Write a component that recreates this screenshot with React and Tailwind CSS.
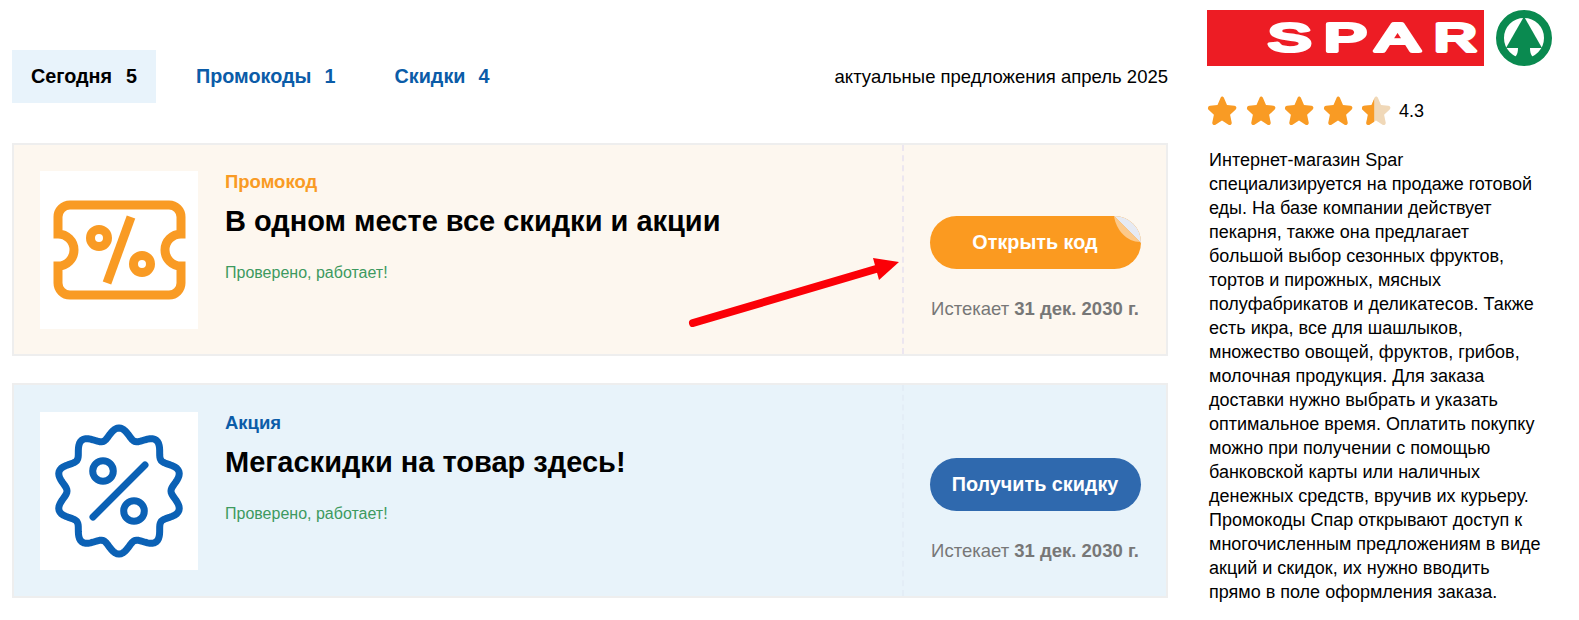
const badgePath = (() => {
  const pts = [];
  for (let i = 0; i < 200; i++) {
    const t = (i / 200) * Math.PI * 2;
    const r = 57.5 + 5.5 * Math.cos(10 * t);
    pts.push(`${(79 + r * Math.sin(t)).toFixed(2)} ${(79 - r * Math.cos(t)).toFixed(2)}`);
  }
  return `M${pts.join("L")}Z`;
})();

const TicketIcon = () => (
  <svg viewBox="0 0 158 158" className="w-[158px] h-[158px]" fill="none" stroke="#f99b24" strokeWidth="9">
    <path d="M30 34H129a12 12 0 0 1 12 12V63a16 16 0 0 0 0 32V112a12 12 0 0 1-12 12H30a12 12 0 0 1-12-12V95a16 16 0 0 0 0-32V46a12 12 0 0 1 12-12Z" />
    <path d="M91 46L67 112" />
    <circle cx="59" cy="67" r="8.5" />
    <circle cx="102" cy="93" r="8.5" />
  </svg>
);

const BadgeIcon = () => (
  <svg viewBox="0 0 158 158" className="w-[158px] h-[158px]" fill="none" stroke="#0b61b5" strokeWidth="7" strokeLinecap="round">
    <path d={badgePath} strokeLinejoin="round" />
    <path d="M105 53L53 105" />
    <circle cx="63" cy="59" r="10.3" />
    <circle cx="94" cy="99" r="10.3" />
  </svg>
);

const Star = ({ half }) => {
  const d = "M15 1.5c.9 0 1.6.6 2 1.4l3 7 7.4.8c2 .2 2.7 2.500 1.300 3.800l-5.600 5.300 1.600 7.600c.4 1.900-1.600 3.300-3.200 2.300L15 25.500l-6.500 4.200c-1.600 1-3.600-.4-3.200-2.300l1.600-7.600-5.600-5.300C.4 13.200 1.100 10.900 3.100 10.700l7.400-.8 3-7c.4-.8 1.100-1.400 1.500-1.400Z";
  return (
    <svg viewBox="0 0 30 32" className="w-[30px] h-[32px]">
      {half ? (
        <>
          <path d={d} fill="#f0d8b8" />
          <path d={d} fill="#f99b24" style={{ clipPath: "inset(0 57% 0 0)" }} />
        </>
      ) : (
        <path d={d} fill="#f99b24" />
      )}
    </svg>
  );
};

// the wordmark stays real text, one stretched letter at a time
const sparLetters = [
  ["S", 62],
  ["P", 118],
  ["A", 170],
  ["R", 228],
];

const SparLogo = () => (
  <svg viewBox="0 0 349 56" className="w-[349px] h-[56px] block">
    <rect x="1" y="0" width="277" height="56" fill="#ed1c24" />
    {sparLetters.map(([ch, x]) => (
      <text key={ch} x={x} y="41" textLength="43" lengthAdjust="spacingAndGlyphs" fontFamily="'Liberation Sans', sans-serif" fontSize="38" fill="#fff" stroke="#fff" strokeWidth="4" strokeLinejoin="round">
        {ch}
      </text>
    ))}
    <circle cx="318" cy="28" r="24" fill="none" stroke="#0a8a50" strokeWidth="8" />
    <path d="M318 6.500L336 38H300Z" fill="#0a8a50" />
    <path d="M312 38H324C324 44 326 48 332 50L318 54L304 50C310 48 312 44 312 38Z" fill="#0a8a50" />
  </svg>
);

const Card = ({ h, pad, btnPad, bg, dash, kind, kindColor, title, icon, btn, btnColor, peel, arrow }) => (
  <div className={`relative flex border-2 border-[#eeeeee] ${h} ${bg}`}>
    <div className={`flex-1 flex pl-[26px] border-r-2 border-dashed ${pad} ${dash}`}>
      <div className="w-[158px] h-[158px] bg-white shrink-0">{icon}</div>
      <div className="ml-[27px]">
        <div className={`text-[18.500px] leading-[22px] font-bold ${kindColor}`}>{kind}</div>
        <div className="mt-[10px] text-[29px] leading-[36px] font-bold text-black">{title}</div>
        <div className="mt-[23px] text-[16px] leading-[22px] text-[#3d9a5f]">Проверено, работает!</div>
      </div>
    </div>
    <div className={`w-[262px] flex flex-col items-center ${btnPad}`}>
      <div className={`relative w-[211px] h-[53px] rounded-full flex items-center justify-center text-white text-[19.800px] font-bold overflow-hidden ${btnColor}`}>
        {btn}
        {peel && (
          <svg viewBox="0 0 28 30" className="absolute right-0 top-0 w-[28px] h-[30px]">
            <path d="M1 0L28 27V0Z" fill="#e6eaf3" />
            <path d="M1 0L27 26C14 26 3 14 1 0Z" fill="#fcc98a" />
          </svg>
        )}
      </div>
      <div className="mt-[28px] text-[18.500px] leading-[24px] text-[#777777]">
        Истекает <b>31 дек. 2030 г.</b>
      </div>
    </div>
    {arrow && (
      <svg viewBox="0 0 230 80" className="absolute left-[670px] top-[103px] w-[230px] h-[80px]">
        <path d="M9 75L192 21" stroke="#fb0007" strokeWidth="8" strokeLinecap="round" />
        <path d="M215 14L189 10L195 32Z" fill="#fb0007" />
      </svg>
    )}
  </div>
);

export default function App() {
  return (
    <div className="flex h-[620px] overflow-hidden bg-white text-black font-['Liberation_Sans',Arial,sans-serif]">
      <div className="ml-3 w-[1156px] pt-[50px] shrink-0">
        <div className="flex items-center h-[53px]">
          <div className="h-full w-[144px] flex items-center justify-center bg-[#e8f3fb] text-[19.800px] font-bold">
            Сегодня<span className="ml-[14px]">5</span>
          </div>
          <div className="ml-10 text-[19.800px] font-bold text-[#0b5ca8]">
            Промокоды<span className="ml-[13px]">1</span>
          </div>
          <div className="ml-[59px] text-[19.800px] font-bold text-[#0b5ca8]">
            Скидки<span className="ml-[13px]">4</span>
          </div>
          <div className="ml-auto text-[18.500px]">актуальные предложения апрель 2025</div>
        </div>
        <div className="mt-[40px] flex flex-col gap-[27px]">
          <Card
            h="h-[213px]"
            pad="pt-[26px]"
            btnPad="pt-[71px]"
            bg="bg-[#fdf7ef]"
            dash="border-[#ece6f0]"
            kind="Промокод"
            kindColor="text-[#f99b24]"
            title="В одном месте все скидки и акции"
            icon={<TicketIcon />}
            btn="Открыть код"
            btnColor="bg-[#fb9a20]"
            peel
            arrow
          />
          <Card
            h="h-[215px]"
            pad="pt-[27px]"
            btnPad="pt-[73px]"
            bg="bg-[#e8f3fa]"
            dash="border-[#e3edf6]"
            kind="Акция"
            kindColor="text-[#0b5ca8]"
            title="Мегаскидки на товар здесь!"
            icon={<BadgeIcon />}
            btn="Получить скидку"
            btnColor="bg-[#2f69ae]"
          />
        </div>
      </div>
      <div className="ml-[38px] w-[340px] pt-[10px] shrink-0">
        <SparLogo />
        <div className="mt-[29px] flex items-center">
          <div className="flex gap-[8.500px] ml-[1px]">
            <Star />
            <Star />
            <Star />
            <Star />
            <Star half />
          </div>
          <span className="ml-2 text-[18px] leading-none">4.3</span>
        </div>
        <p className="mt-[21px] ml-[3px] text-[18px] leading-[24px] w-[337px]">
          Интернет-магазин Spar специализируется на продаже готовой еды. На базе компании действует пекарня, также она предлагает большой выбор сезонных фруктов, тортов и пирожных, мясных полуфабрикатов и деликатесов. Также есть икра, все для шашлыков, множество овощей, фруктов, грибов, молочная продукция. Для заказа доставки нужно выбрать и указать оптимальное время. Оплатить покупку можно при получении с помощью банковской карты или наличных денежных средств, вручив их курьеру. Промокоды Спар открывают доступ к многочисленным предложениям в виде акций и скидок, их нужно вводить прямо в поле оформления заказа.
        </p>
      </div>
    </div>
  );
}
